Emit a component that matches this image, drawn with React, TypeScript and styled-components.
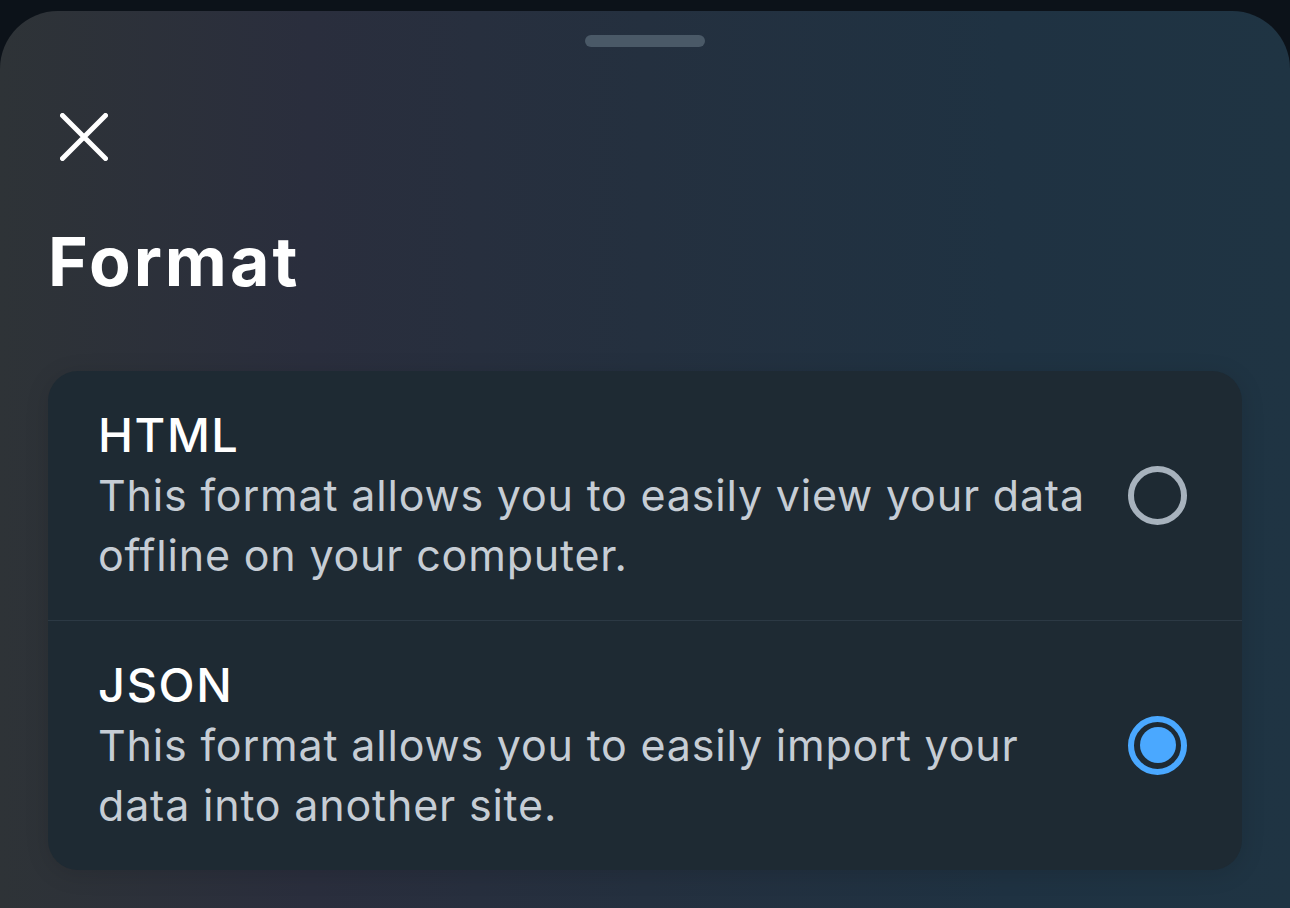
import React from "react";
import styled, { createGlobalStyle } from "styled-components";

const Global = createGlobalStyle`
  html, body { margin: 0; padding: 0; background: #0c1219; }
  body { font-family: Inter, "Noto Sans", sans-serif; -webkit-font-smoothing: antialiased; }
  #root { min-height: 908px; }
`;

const Page = styled.div`
  width: 1290px;
  height: 908px;
  overflow: hidden;
  background: #0c1219;
  padding-top: 11px;
  box-sizing: border-box;
`;

const Sheet = styled.div`
  height: 897px;
  box-sizing: border-box;
  border-radius: 58px 58px 0 0;
  background: linear-gradient(90deg, #2e3337 0%, #2a2e3d 24%, #24303f 50%, #1f3242 78%, #1f3443 100%);
  padding: 24px 48px 0 48px;
  display: flex;
  flex-direction: column;
`;

const Handle = styled.div`
  width: 120px;
  height: 12px;
  border-radius: 6px;
  background: #4a5967;
  align-self: center;
`;

const CloseButton = styled.button`
  margin: 66px 0 0 12px;
  padding: 0;
  width: 48px;
  height: 48px;
  border: none;
  background: none;
  display: flex;
  cursor: pointer;
`;

const Title = styled.h1`
  margin: 60px 0 0 0;
  font-size: 68px;
  line-height: 80px;
  font-weight: 700;
  color: #ffffff;
  letter-spacing: 3px;
`;

const Card = styled.div`
  margin-top: 70px;
  background: #1e2a33;
  border-radius: 30px;
  overflow: hidden;
  box-shadow: 0 4px 24px rgba(0, 0, 0, 0.12);
`;

const Row = styled.div<{ $divider?: boolean }>`
  display: flex;
  align-items: center;
  gap: 35px;
  padding: 34px 55px 35px 50px;
  border-top: ${(p) => (p.$divider ? "1px solid #2c3944" : "none")};
`;

const TextCol = styled.div`
  flex: 1;
  display: flex;
  flex-direction: column;
`;

const OptionTitle = styled.div`
  font-size: 47px;
  line-height: 60px;
  font-weight: 500;
  color: #ffffff;
  letter-spacing: 1.6px;
`;

const OptionDesc = styled.div`
  font-size: 43px;
  line-height: 60px;
  font-weight: 400;
  color: #c6cdd5;
  letter-spacing: 0.8px;
`;

const Radio = styled.div<{ $checked?: boolean }>`
  flex: none;
  width: 59px;
  height: 59px;
  box-sizing: border-box;
  border-radius: 50%;
  border: 6px solid ${(p) => (p.$checked ? "#4aa8ff" : "#a7b2bd")};
  display: flex;
  align-items: center;
  justify-content: center;
`;

const RadioDot = styled.div`
  width: 36px;
  height: 36px;
  border-radius: 50%;
  background: #4aa8ff;
`;

const options = [
  {
    title: "HTML",
    desc: "This format allows you to easily view your data offline on your computer.",
    checked: false,
  },
  {
    title: "JSON",
    desc: "This format allows you to easily import your data into another site.",
    checked: true,
  },
];

export default function App() {
  return (
    <Page>
      <Global />
      <Sheet>
        <Handle />
        <CloseButton aria-label="Close">
          <svg width="48" height="48" viewBox="0 0 48 48">
            <path d="M2.5 2.5 L45.5 45.5 M45.5 2.5 L2.5 45.5" stroke="#ffffff" strokeWidth="5" strokeLinecap="round" fill="none" />
          </svg>
        </CloseButton>
        <Title>Format</Title>
        <Card>
          {options.map((o, i) => (
            <Row key={o.title} $divider={i > 0}>
              <TextCol>
                <OptionTitle>{o.title}</OptionTitle>
                <OptionDesc>{o.desc}</OptionDesc>
              </TextCol>
              <Radio $checked={o.checked}>{o.checked && <RadioDot />}</Radio>
            </Row>
          ))}
        </Card>
      </Sheet>
    </Page>
  );
}
